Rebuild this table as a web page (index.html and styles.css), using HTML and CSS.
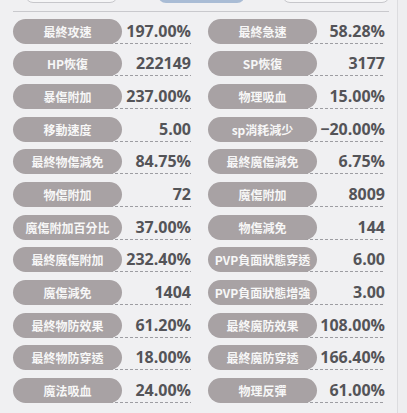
FILE: index.html
```html
<!DOCTYPE html>
<html>
<head>
<meta charset="utf-8">
<link rel="stylesheet" href="styles.css">
</head>
<body>
<div class="page">
  <div class="tabs">
    <div class="tab tab-a"></div>
    <div class="tab tab-b active"></div>
    <div class="tab tab-c"></div>
  </div>
  <div class="sep"></div>
  <div class="grid">
    <div class="cell"><div class="pill">最終攻速</div><div class="val">197.00%</div></div>
    <div class="cell"><div class="pill">最終急速</div><div class="val">58.28%</div></div>
    <div class="cell"><div class="pill">HP恢復</div><div class="val">222149</div></div>
    <div class="cell"><div class="pill">SP恢復</div><div class="val">3177</div></div>
    <div class="cell"><div class="pill">暴傷附加</div><div class="val">237.00%</div></div>
    <div class="cell"><div class="pill">物理吸血</div><div class="val">15.00%</div></div>
    <div class="cell"><div class="pill">移動速度</div><div class="val">5.00</div></div>
    <div class="cell"><div class="pill">sp消耗減少</div><div class="val">−20.00%</div></div>
    <div class="cell"><div class="pill">最終物傷減免</div><div class="val">84.75%</div></div>
    <div class="cell"><div class="pill">最終魔傷減免</div><div class="val">6.75%</div></div>
    <div class="cell"><div class="pill">物傷附加</div><div class="val">72</div></div>
    <div class="cell"><div class="pill">魔傷附加</div><div class="val">8009</div></div>
    <div class="cell"><div class="pill">魔傷附加百分比</div><div class="val">37.00%</div></div>
    <div class="cell"><div class="pill">物傷減免</div><div class="val">144</div></div>
    <div class="cell"><div class="pill">最終魔傷附加</div><div class="val">232.40%</div></div>
    <div class="cell"><div class="pill">PVP負面狀態穿透</div><div class="val">6.00</div></div>
    <div class="cell"><div class="pill">魔傷減免</div><div class="val">1404</div></div>
    <div class="cell"><div class="pill">PVP負面狀態增強</div><div class="val">3.00</div></div>
    <div class="cell"><div class="pill">最終物防效果</div><div class="val">61.20%</div></div>
    <div class="cell"><div class="pill">最終魔防效果</div><div class="val">108.00%</div></div>
    <div class="cell"><div class="pill">最終物防穿透</div><div class="val">18.00%</div></div>
    <div class="cell"><div class="pill">最終魔防穿透</div><div class="val">166.40%</div></div>
    <div class="cell"><div class="pill">魔法吸血</div><div class="val">24.00%</div></div>
    <div class="cell"><div class="pill">物理反彈</div><div class="val">61.00%</div></div>
  </div>
</div>
</body>
</html>
```

FILE: styles.css
```css
html, body {
  margin: 0;
  padding: 0;
  background: #eeeef0;
}
.page {
  width: 398px;
  height: 413px;
  border-right: 1px solid #dcdcdf;
  background: #f0f0f2;
  overflow: hidden;
  box-sizing: border-box;
}
.tabs {
  height: 3px;
  display: flex;
  align-items: flex-end;
  padding-left: 25px;
  overflow: visible;
}
.tab {
  height: 20px;
  margin-top: -17px;
  border-radius: 0 0 8px 8px;
  box-sizing: border-box;
  align-self: flex-start;
}
.tab-a {
  width: 93px;
  background: #f6f6f7;
  border: 1px solid #c7c7cb;
}
.tab-b {
  width: 87px;
  margin-left: 40px;
  background: #a9bcd5;
}
.tab-c {
  width: 108px;
  margin-left: 37px;
  background: #f6f6f7;
  border: 1px solid #c7c7cb;
}
.sep {
  margin: 8px 0 0 13px;
  width: 376px;
  height: 1px;
  background: #c9c9cd;
}
.grid {
  margin: 6.5px 0 0 13px;
  display: grid;
  grid-template-columns: 178px 177px;
  column-gap: 17px;
  grid-auto-rows: 25px;
  row-gap: 7.7px;
}
.cell {
  display: flex;
  align-items: stretch;
  height: 25px;
}
.pill {
  position: relative;
  z-index: 1;
  flex: 0 0 109px;
  height: 25px;
  border-radius: 12.5px;
  background: #a8a2a4;
  color: #f7f7f7;
  font-family: "Noto Sans CJK TC", "Noto Sans", sans-serif;
  font-size: 12px;
  font-weight: 700;
  line-height: 25px;
  text-align: center;
  white-space: nowrap;
}
.val {
  flex: 1 1 auto;
  margin-left: -12px;
  text-align: right;
  font-family: "Open Sans", "Liberation Sans", sans-serif;
  font-weight: 700;
  font-size: 16px;
  line-height: 25px;
  color: #545458;
  background-image: linear-gradient(to right, #9d9da2 0 3px, transparent 3px 5px);
  background-size: 5px 1px;
  background-repeat: repeat-x;
  background-position: left bottom;
}
```
